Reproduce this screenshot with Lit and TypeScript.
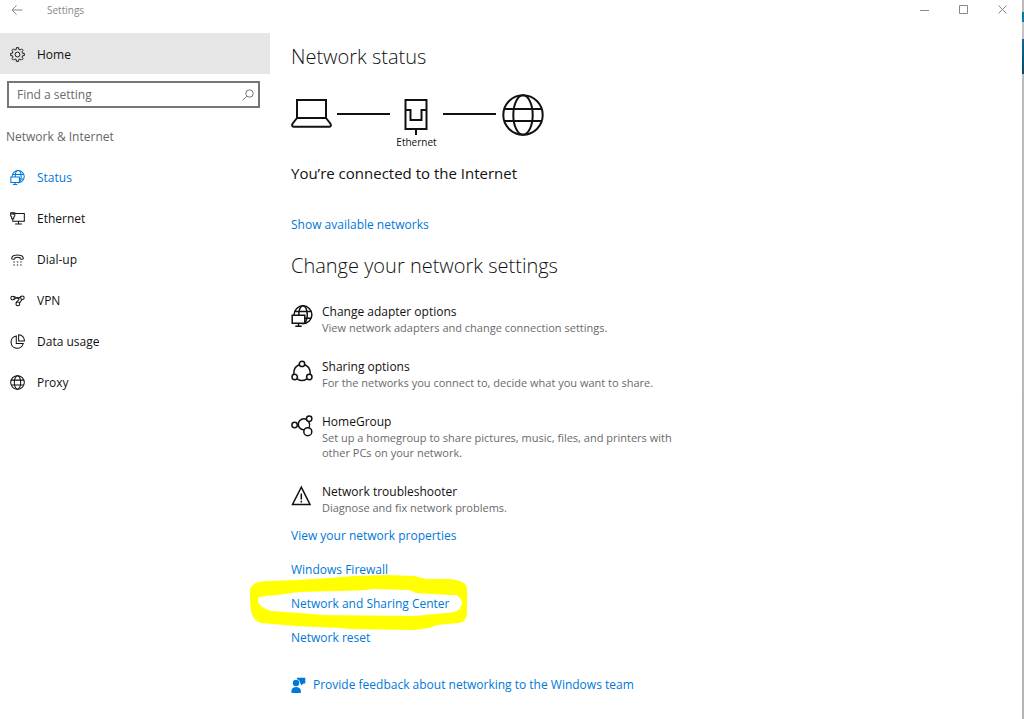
import { LitElement, html, svg, css, nothing, type SVGTemplateResult } from "lit";
import { customElement, state } from "lit/decorators.js";

const globe = svg`<circle cx="21" cy="21" r="19.7"/><ellipse cx="21" cy="21" rx="9.7" ry="19.7"/><path d="M2.5 15h37M2.5 27h37"/>`;

/* Globe with a small monitor in front, drawn on a 22px grid */
const globeMonitor = svg`
  <circle cx="12" cy="9.700" r="8.900"/><ellipse cx="12" cy="9.700" rx="4.300" ry="8.900"/><path d="M4 6.500h16M4 13.300h16"/>
  <path class="screen" d="M1.200 10.300h12.600v7.900H1.200z"/><path d="M7.500 18.200v3M4.300 21.200h6.400"/>`;

const icons: Record<string, SVGTemplateResult> = {
  status: globeMonitor,
  ethernet: svg`<path d="M7.500 3.500H21v11.500H4v-4M12.500 15v4M7.500 19.200h10M1 2.500h6v4.500L5.500 9v2.500h-3V9L1 7zM3 2.500v3M5 2.500v3"/>`,
  dialup: svg`<path d="M2.500 9.500C2.500 2.500 19.500 2.500 19.500 9.500c0 1.400-4.800 1.400-4.800 0V8.300c-2.400-.9-5-.9-7.400 0v1.200c0 1.400-4.800 1.400-4.800 0z"/><path stroke-dasharray="2 3" d="M5 14.500h12M5 19h12"/>`,
  vpn: svg`<circle cx="3.800" cy="7.500" r="2.600"/><circle cx="18.200" cy="7" r="2.600"/><circle cx="11.500" cy="16" r="2.800"/><path d="M5.600 5.700c2.800-1.700 4.600 4 7 2.200 1.400-1 2.500-2.700 4-3M5.800 9.400c2.200-.5 3.600-3.400 5.600-2.900 1.900.4 2.400 2.600.6 4.400-1.500 1.300-2.800 2-3.100 3.900M17.200 9.400c-.5 3-2.600 3.200-3.100 5.400"/>`,
  data: svg`<path d="M9.200 2.800a9.100 9.100 0 1 0 10.300 11H9.200zM12.700 1v9.300h8.500a9 9 0 0 0-8.500-9.300z"/>`,
  proxy: svg`<circle cx="11" cy="11" r="10"/><ellipse cx="11" cy="11" rx="4.700" ry="10"/><path d="M1.700 7.500h18.600M1.700 14.500h18.600"/>`,
  sharing: svg`<circle cx="11" cy="3.900" r="2.700"/><circle cx="3.700" cy="17" r="2.700"/><circle cx="18.300" cy="17" r="2.700"/><path d="M8.300 4.700C4.800 6 2.500 9.500 2.900 14.400M13.700 4.700c3.500 1.300 5.800 4.800 5.400 9.700M6.200 18.800c3 2.200 6.600 2.200 9.600 0"/>`,
  homegroup: svg`<circle cx="3.600" cy="10" r="2.700"/><circle cx="18.200" cy="3.700" r="2.700"/><circle cx="16.800" cy="16.700" r="4"/><path d="M15.600 4.600a5.500 5.500 0 1 0-2.600 10.200M17.700 6.400c1.100 2 1.300 4.200.5 6.300"/>`,
  warning: svg`<path d="M10.300 2.200L19 19.500H1.500zM10.300 8.500v6M10.300 15.800v1.700"/>`,
};

const teeth = Array.from({ length: 8 }, (_, i) => {
  const at = (r: number, deg: number) => {
    const a = ((i * 45 + deg) * Math.PI) / 180;
    return `${(8 + r * Math.cos(a)).toFixed(2)} ${(8 + r * Math.sin(a)).toFixed(2)}`;
  };
  return `${at(5.6, -13)}L${at(7.4, -10)}L${at(7.4, 10)}L${at(5.6, 13)}`;
});
const gear = svg`<path d="M${teeth.join("L")}z"/><circle cx="8" cy="8" r="2.600"/>`;

const pages = [
  { id: "status", label: "Status" },
  { id: "ethernet", label: "Ethernet" },
  { id: "dialup", label: "Dial-up" },
  { id: "vpn", label: "VPN" },
  { id: "data", label: "Data usage" },
  { id: "proxy", label: "Proxy" },
];

const options = [
  { icon: "status", title: "Change adapter options", text: "View network adapters and change connection settings." },
  { icon: "sharing", title: "Sharing options", text: "For the networks you connect to, decide what you want to share." },
  { icon: "homegroup", title: "HomeGroup", text: "Set up a homegroup to share pictures, music, files, and printers with other PCs on your network." },
  { icon: "warning", title: "Network troubleshooter", text: "Diagnose and fix network problems." },
];

const links = [
  { label: "View your network properties", marked: false },
  { label: "Windows Firewall", marked: false },
  { label: "Network and Sharing Center", marked: true },
  { label: "Network reset", marked: false },
];

@customElement("app-root")
export class AppRoot extends LitElement {
  @state() private current = "status";

  static styles = css`
    :host {
      display: flex;
      min-height: 100vh;
      background: #fff;
      color: #111;
      font: 12px/20px "Open Sans", "Noto Sans", sans-serif;
    }
    * { box-sizing: border-box; }
    h1, h2, h3, p, ul, figure { margin: 0; padding: 0; font-weight: 400; }
    ul { list-style: none; }
    button { border: 0; padding: 0; background: none; font: inherit; color: inherit; }
    a { color: #0078d7; text-decoration: none; }
    svg { display: block; flex: none; fill: none; stroke: currentColor; }
    .screen { fill: #fff; }
    .window { flex: 1; min-width: 0; }
    .edge {
      flex: none;
      width: 2px;
      background: linear-gradient(#bbb 12px, #0a76a8 12px 22px, #c4c4c4 22px 39px, #0a6a96 39px, #0b4766 74px, #bcbcbc 74px, #b4b4b4);
    }
    .titlebar { display: flex; align-items: center; height: 19px; color: #888; }
    .back { width: 33px; padding-left: 11px; }
    .caption { flex: 1; padding-left: 14px; font-size: 10px; line-height: 18px; }
    .controls { display: flex; }
    .controls button { display: grid; place-items: center; width: 39px; height: 19px; }
    .body { display: flex; padding-top: 14px; }
    .sidebar { flex: none; width: 270px; }
    .row { display: flex; align-items: center; gap: 12px; width: 100%; height: 41px; padding: 2px 0 0 10px; text-align: left; }
    .home { background: #e6e6e6; }
    .active { color: #0078d7; }
    .search {
      display: flex;
      align-items: center;
      height: 27px;
      margin: 7px 10px 0 7px;
      padding: 0 4px 0 8px;
      border: 2px solid #767676;
      color: #767676;
    }
    .search input { flex: 1; min-width: 0; border: 0; padding: 0; outline: 0; background: none; font: inherit; color: #111; }
    .search input::placeholder { color: #6a6a6a; opacity: 1; }
    .group { padding: 19px 0 9px 6px; color: #666; }
    .main { flex: 1; min-width: 0; padding: 10px 20px 24px 21px; }
    .main h1, .main h2 { font-size: 20px; font-weight: 300; line-height: 28px; }
    .diagram { display: flex; padding-top: 23px; }
    .wire { width: 53px; height: 2px; margin-top: 19px; background: #111; }
    .laptop { margin-right: 4px; }
    .device { display: flex; flex-direction: column; align-items: center; width: 53px; font-size: 10px; line-height: 13px; }
    .globe { margin-left: 6px; }
    .connected { margin: 14px 0 32px; font-size: 15px; }
    .main h2 { margin-top: 17px; }
    .options { display: flex; flex-direction: column; gap: 23px; margin: 23px 0 11px; }
    .option { display: flex; gap: 9px; }
    .option svg { margin-top: 2px; }
    .option h3 { font-size: 12px; line-height: 17px; }
    .option p { max-width: 350px; font-size: 11px; line-height: 15px; color: #6a6a6a; }
    .links { display: flex; flex-direction: column; gap: 14px; }
    .links li { position: relative; }
    .links a { position: relative; }
    .marker { position: absolute; left: -42px; top: -19px; stroke: none; pointer-events: none; }
    .marker path { fill: #ff0; }
    .feedback { display: flex; align-items: center; gap: 7px; margin-top: 27px; color: #0078d7; }
    .feedback svg { fill: currentColor; stroke: none; }
  `;

  private icon(name: string, size: number, width: number) {
    return html`<svg width=${size} height=${size} viewBox="0 0 22 22" stroke-width=${width} aria-hidden="true">${icons[name]}</svg>`;
  }

  render() {
    return html`
      <div class="window">
        <header class="titlebar">
          <button class="back" aria-label="Back">
            <svg width="12" height="12" viewBox="0 0 12 12"><path d="M11.500 6H1M5.500 1.500L1 6l4.500 4.500"/></svg>
          </button>
          <span class="caption">Settings</span>
          <div class="controls">
            <button aria-label="Minimize"><svg width="10" height="10"><path d="M0 5.500h9"/></svg></button>
            <button aria-label="Maximize"><svg width="10" height="10"><path d="M.5 .5h8v8h-8z"/></svg></button>
            <button aria-label="Close"><svg width="10" height="10"><path d="M.5.5l8 8M8.500.5l-8 8"/></svg></button>
          </div>
        </header>
        <div class="body">
          <nav class="sidebar" aria-label="Settings">
            <button class="row home">
              <svg width="15" height="15" viewBox="0 0 16 16">${gear}</svg>Home
            </button>
            <label class="search">
              <input type="text" placeholder="Find a setting" aria-label="Find a setting" />
              <svg width="12" height="12" viewBox="0 0 12 12"><circle cx="7.500" cy="4.500" r="3.700"/><path d="M4.800 7.200L.6 11.400"/></svg>
            </label>
            <p class="group">Network &amp; Internet</p>
            ${pages.map(
              (p) => html`<button
                class="row ${p.id === this.current ? "active" : ""}"
                @click=${() => (this.current = p.id)}
              >${this.icon(p.id, 15, 1.5)}${p.label}</button>`
            )}
          </nav>
          <main class="main">
            <h1>Network status</h1>
            <div class="diagram">
              <svg class="laptop" width="42" height="42" stroke-width="2" aria-hidden="true">
                <path d="M6 6h29v18H6zM6 24l-4.300 5.500c-1.200 1.800-.5 3.300 1.500 3.300h34.600c2 0 2.700-1.500 1.500-3.300L35 24"/>
              </svg>
              <div class="wire"></div>
              <figure class="device">
                <svg width="26" height="42" stroke-width="2" aria-hidden="true"><path d="M1.500 6h21v29h-21zM1.500 16h5v10h11V16h5M12 35v6"/></svg>
                <figcaption>Ethernet</figcaption>
              </figure>
              <div class="wire"></div>
              <svg class="globe" width="42" height="42" stroke-width="2" aria-hidden="true">${globe}</svg>
            </div>
            <p class="connected">You’re connected to the Internet</p>
            <p><a href="#networks">Show available networks</a></p>
            <h2>Change your network settings</h2>
            <ul class="options">
              ${options.map(
                (o) => html`<li class="option">
                  ${this.icon(o.icon, 22, 1.5)}
                  <div><h3>${o.title}</h3><p>${o.text}</p></div>
                </li>`
              )}
            </ul>
            <ul class="links">
              ${links.map(
                (l) => html`<li>
                  ${l.marked
                    ? html`<svg class="marker" width="220" height="56" viewBox="0 0 220 56" aria-hidden="true">
                        <path fill-rule="evenodd" d="M5 9Q9 6 20 6L48 5 80 3 105 1 138 0 165 1 177 4 200 4Q213 5 217 10Q219 15 218 25V37Q218 47 210 48L188 50 180 53 165 55 100 54 92 53 46 51 12 48Q4 46 2 36L1 24V14Q2 11 5 9zM9 23Q12 21 28 20L50 17 110 15.500 125 14 160 15 167 18 200 20 207 20Q213 23 213 28L211 34Q206 38 196 38L165 41 75 40 50 38 22 36Q12 33 9 27z"/>
                      </svg>`
                    : nothing}
                  <a href="#link">${l.label}</a>
                </li>`
              )}
            </ul>
            <p class="feedback">
              <svg width="15" height="17" viewBox="0 0 15 17" aria-hidden="true"><circle cx="5" cy="6" r="3.200"/><path d="M.5 16v-2.500C.5 8.800 9.800 8.800 9.800 13.500V16zM6 .8h8.300v5.600h-1.800L10 8.500V6.400H8.800C9.200 4.200 8.200 2.800 6 2.200z"/></svg>
              <a href="#feedback">Provide feedback about networking to the Windows team</a>
            </p>
          </main>
        </div>
      </div>
      <div class="edge"></div>
    `;
  }
}
